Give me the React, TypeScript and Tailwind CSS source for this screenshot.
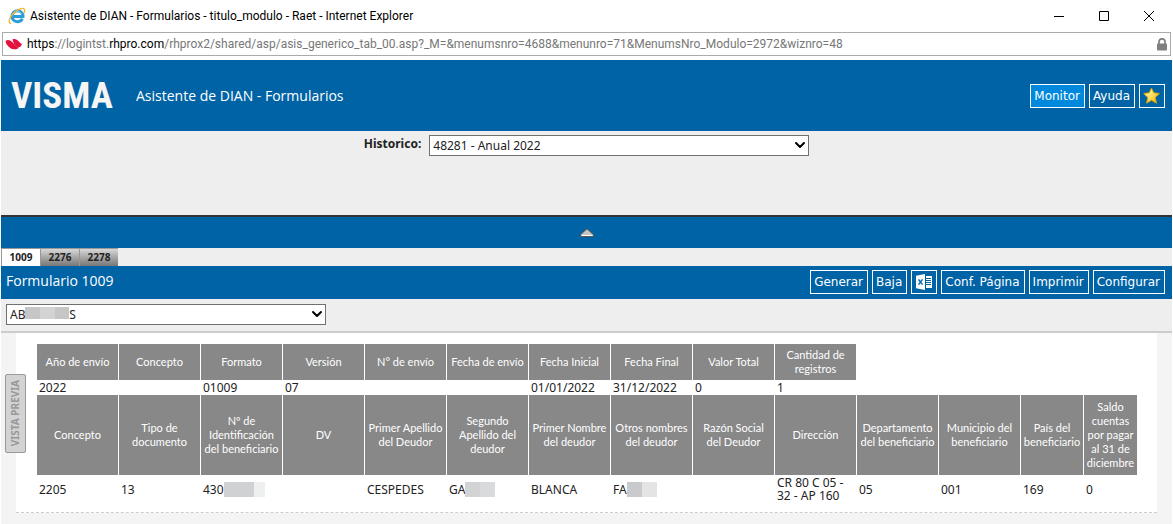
import type { ReactNode } from "react";
import { ChevronDown } from "lucide-react";

type Cell = { text: string; mask?: string[] };

const summaryHeaders = [
  "Año de envío",
  "Concepto",
  "Formato",
  "Versión",
  "N° de envío",
  "Fecha de envío",
  "Fecha Inicial",
  "Fecha Final",
  "Valor Total",
  "Cantidad de registros",
];

const summaryRow = ["2022", "", "01009", "07", "", "", "01/01/2022", "31/12/2022", "0", "1"];

const detailHeaders = [
  "Concepto",
  "Tipo de documento",
  "Nº de Identificación del beneficiario",
  "DV",
  "Primer Apellido del Deudor",
  "Segundo Apellido del deudor",
  "Primer Nombre del deudor",
  "Otros nombres del deudor",
  "Razón Social del Deudor",
  "Dirección",
  "Departamento del beneficiario",
  "Municipio del beneficiario",
  "País del beneficiario",
  "Saldo cuentas por pagar al 31 de diciembre",
];

const detailRow: Cell[] = [
  { text: "2205" },
  { text: "13" },
  { text: "430", mask: ["w-[30px] bg-[#d0d1d3]", "w-[11px] bg-[#eeefef]"] },
  { text: "" },
  { text: "CESPEDES" },
  { text: "GA", mask: ["w-[15px] bg-[#d2d3d5]", "w-[15px] bg-[#d9dadc]"] },
  { text: "BLANCA" },
  { text: "FA", mask: ["w-[15px] bg-[#c9cacc]", "w-[15px] bg-[#e4e4e4]"] },
  { text: "" },
  { text: "CR 80 C 05 - 32 - AP 160" },
  { text: "05" },
  { text: "001" },
  { text: "169" },
  { text: "0" },
];

const tabs = ["1009", "2276", "2278"];

const windowButtons = [
  { label: "Minimizar", path: "M0 5.5h10" },
  { label: "Maximizar", path: "M.5.5h9v9h-9z" },
  { label: "Cerrar", path: "M0 0l10 10M10 0L0 10" },
];

function IeLogo() {
  return (
    <svg width="18" height="18" viewBox="0 0 18 18" fill="none" aria-hidden="true">
      <path d="M14.400 11.800A5.500 5.500 0 1 1 15 9.600H5.600" stroke="#2b9ddb" strokeWidth="3" />
      <path d="M4.800 6.500a5.300 5.300 0 0 1 9 .5" stroke="#7ccbf0" strokeWidth="1" />
      <path
        d="M2.600 16.600C.2 15.800 1 11.200 4.600 7.200 8.600 2.700 14 .4 16 1.800c1 .8.800 2.500 0 4.200"
        stroke="#f3b62c"
        strokeWidth="1.300"
        strokeLinecap="round"
      />
    </svg>
  );
}

function SiteIcon() {
  return (
    <svg width="18" height="14" viewBox="0 0 18 14" fill="#e4113f" aria-hidden="true">
      <path d="M.6 4C2.200 2.200 5 2.600 7.300 5L11 9c1 .9 2.200 1.500 3.300 1.600-2.300 2.300-6 2.300-9 .3C2.500 9.200.7 6.800.6 4z" />
      <path d="M7.500 2.400c2.500-1 4.700.2 6.300 2.200 1 1.300 1.900 2 3 2.300-.3 2.200-1.800 3.300-3.600 3.200-2.300-.2-4.600-3.300-5.700-7.700z" />
    </svg>
  );
}

function LockIcon() {
  return (
    <svg width="10" height="13" viewBox="0 0 10 13" aria-hidden="true">
      <path d="M2 6V3.800a3 3 0 0 1 6 0V6" fill="none" stroke="#808080" strokeWidth="1.700" />
      <rect y="5.500" width="10" height="7" rx=".8" fill="#808080" />
    </svg>
  );
}

function StarIcon() {
  return (
    <svg width="17" height="17" viewBox="0 0 17 17" aria-hidden="true">
      <defs>
        <linearGradient id="star" x1="0" y1="0" x2="1" y2="1">
          <stop offset="0.300" stopColor="#fff08a" />
          <stop offset="1" stopColor="#f5b000" />
        </linearGradient>
      </defs>
      <path
        d="M8.500 1l2.200 4.800 5.700.7-4.200 3.900 1.300 5.800-5-2.900-5 2.900 1.300-5.800L.6 6.500l5.700-.7z"
        fill="url(#star)"
        stroke="#dd9d00"
        strokeLinejoin="round"
      />
    </svg>
  );
}

function ExcelIcon() {
  return (
    <svg width="17" height="16" viewBox="-1 0 17 16" aria-hidden="true">
      <path d="M0 1.700L9 0v16l-9-1.700z" fill="#fff" />
      <path d="M2.500 5.300l4 5.400M6.500 5.300l-4 5.400" stroke="#0063a6" strokeWidth="1.400" />
      <path d="M10 2h6v12h-6z" fill="#fff" />
      <path d="M10 4.500h5M10 6.500h5M10 8.500h5M10 10.500h5" stroke="#0063a6" />
    </svg>
  );
}

function BarButton({ children, active, label }: { children: ReactNode; active?: boolean; label?: string }) {
  return (
    <button
      type="button"
      aria-label={label}
      className={`flex h-6 items-center border border-white pr-1 pl-[3px] font-['DejaVu_Sans',sans-serif] leading-4 text-white ${
        active ? "bg-[#0088dd]" : "bg-[#0063a6]"
      }`}
    >
      {children}
    </button>
  );
}

function Mask({ blocks }: { blocks: string[] }) {
  return (
    <span className="flex h-[15px]">
      {blocks.map((block, i) => (
        <span key={i} className={block} />
      ))}
    </span>
  );
}

function HeaderCell({ children }: { children: ReactNode }) {
  return (
    <th scope="col" className="border-r border-white bg-[#888888] px-0.5 py-0 font-['Lato',sans-serif] text-[11px] leading-[14px] font-normal text-white">
      {children}
    </th>
  );
}

export default function App() {
  return (
    <div className="bg-white font-['Noto_Sans',sans-serif] text-xs text-[#222]">
      <header className="flex h-8 items-center justify-between pr-[19px] pl-2">
        <div className="flex items-center gap-1 font-['Roboto',sans-serif] text-black">
          <IeLogo />
          <span>Asistente de DIAN - Formularios - titulo_modulo - Raet - Internet Explorer</span>
        </div>
        <div className="flex items-center gap-[35px] text-black">
          {windowButtons.map((button) => (
            <button key={button.label} type="button" aria-label={button.label}>
              <svg width="10" height="10" viewBox="0 0 10 10" fill="none" stroke="currentColor">
                <path d={button.path} />
              </svg>
            </button>
          ))}
        </div>
      </header>

      <div className="mx-0.5 flex h-6 items-center gap-1 border border-[#aaa] pr-[3px] pl-[2px]">
        <SiteIcon />
        <p className="flex-1 font-['Roboto',sans-serif] text-[#777]">
          <span className="text-black">https</span>://logintst.<span className="text-black">rhpro.com</span>
          /rhprox2/shared/asp/asis_generico_tab_00.asp?_M=&amp;menumsnro=4688&amp;menunro=71&amp;MenumsNro_Modulo=2972&amp;wiznro=48
        </p>
        <LockIcon />
      </div>

      <main className="mx-px mt-1">
        <div className="flex h-[71px] items-center justify-between bg-[#0063a6] pr-[7px] pl-[10px] text-white">
          <div className="flex items-center">
            <span className="w-[125px] font-['Roboto_Condensed','Roboto',sans-serif] text-[37px] leading-none font-bold text-[#f5f5f5]">
              VISMA
            </span>
            <h1 className="font-['Open_Sans',sans-serif] text-sm">Asistente de DIAN - Formularios</h1>
          </div>
          <div className="flex gap-1">
            <BarButton active>Monitor</BarButton>
            <BarButton>Ayuda</BarButton>
            <BarButton label="Favoritos">
              <StarIcon />
            </BarButton>
          </div>
        </div>

        <div className="flex h-[86px] items-start justify-center gap-2 border-b-2 border-[#333] bg-[#eee] pt-1">
          <label htmlFor="historico" className="leading-[18px] font-bold">
            Historico:
          </label>
          <div className="relative w-[380px]">
            <select id="historico" className="h-[21px] w-full appearance-none border border-[#707070] bg-white px-[3px]">
              <option>48281 - Anual 2022</option>
            </select>
            <ChevronDown size={16} strokeWidth={3} className="pointer-events-none absolute top-[2px] right-px text-black" />
          </div>
        </div>

        <button type="button" aria-label="Contraer" className="flex h-[31px] w-full items-center justify-center bg-[#0063a6]">
          <svg width="14" height="9" viewBox="0 0 14 9" aria-hidden="true">
            <path d="M7 .8l6.300 5.700v2H.7v-2z" fill="#c4c4c4" stroke="#555" />
            <path d="M1.500 7.500h11" stroke="#fff" />
          </svg>
        </button>

        <nav className="flex h-[18px] bg-[#eee] font-['Open_Sans',sans-serif] text-[10px] font-bold">
          {tabs.map((tab, i) => (
            <button
              key={tab}
              type="button"
              className={`w-[39px] border-t border-l border-[#999] ${
                i === 0 ? "bg-white" : "bg-linear-to-b from-[#d8d8d8] to-[#777]"
              }`}
            >
              {tab}
            </button>
          ))}
        </nav>

        <div className="flex h-[33px] items-start justify-between bg-[#0063a6] pt-1 pr-[7px] pl-[5px] text-white">
          <h2 className="font-['Open_Sans',sans-serif] text-sm leading-[22px]">Formulario 1009</h2>
          <div className="flex gap-1">
            <BarButton>Generar</BarButton>
            <BarButton>Baja</BarButton>
            <BarButton label="Excel">
              <ExcelIcon />
            </BarButton>
            <BarButton>Conf. Página</BarButton>
            <BarButton>Imprimir</BarButton>
            <BarButton>Configurar</BarButton>
          </div>
        </div>

        <div className="border-b-2 border-[#ccc] bg-[#eee] px-[5px] pt-[5px] pb-[6px]">
          <div className="relative w-80">
            <select aria-label="Empresa" className="block h-[21px] w-full appearance-none border border-[#707070] bg-white px-[3px]">
              <option>{"AB" + "\u00a0".repeat(14) + "S"}</option>
            </select>
            <div className="pointer-events-none absolute top-[3px] left-[19px] flex h-3">
              <span className="w-[15px] bg-[#c6c6c6]" />
              <span className="w-[15px] bg-[#d3d3d3]" />
              <span className="w-[14px] bg-[#c6c6c6]" />
            </div>
            <ChevronDown size={16} strokeWidth={3} className="pointer-events-none absolute top-[2px] right-px text-black" />
          </div>
        </div>

        <div className="relative bg-[#f4f4f4] px-[15px] pb-[11px]">
          <div className="border-b border-dashed border-[#ccc] bg-white pt-[11px] pb-[9px] pl-[21px]">
            <table className="w-[1101px] table-fixed border-separate border-spacing-0">
              <colgroup>
                {detailHeaders.map((header, i) => (
                  <col key={header} className={i === 13 ? "w-[54px]" : i === 12 ? "w-[63px]" : "w-[82px]"} />
                ))}
              </colgroup>
              <tbody>
                <tr className="h-9">
                  {summaryHeaders.map((header) => (
                    <HeaderCell key={header}>{header}</HeaderCell>
                  ))}
                </tr>
                <tr className="h-[15px]">
                  {summaryRow.map((value, i) => (
                    <td key={i} className="px-0.5 py-0 leading-[15px]">
                      {value}
                    </td>
                  ))}
                </tr>
                <tr className="h-20">
                  {detailHeaders.map((header) => (
                    <HeaderCell key={header}>{header}</HeaderCell>
                  ))}
                </tr>
                <tr className="h-7">
                  {detailRow.map((cell, i) => (
                    <td key={i} className="px-0.5 py-0 leading-[13px]">
                      {cell.mask ? (
                        <span className="flex items-center">
                          {cell.text}
                          <Mask blocks={cell.mask} />
                        </span>
                      ) : (
                        cell.text
                      )}
                    </td>
                  ))}
                </tr>
              </tbody>
            </table>
          </div>
          <button
            type="button"
            className="absolute top-[41px] left-1 flex h-[79px] w-[21px] items-center justify-center rounded-xs border border-[#999] bg-[#d3d3d3] text-[10px] font-bold text-[#999]"
          >
            <span className="rotate-180 [writing-mode:vertical-rl]">VISTA PREVIA</span>
          </button>
        </div>
      </main>
    </div>
  );
}
